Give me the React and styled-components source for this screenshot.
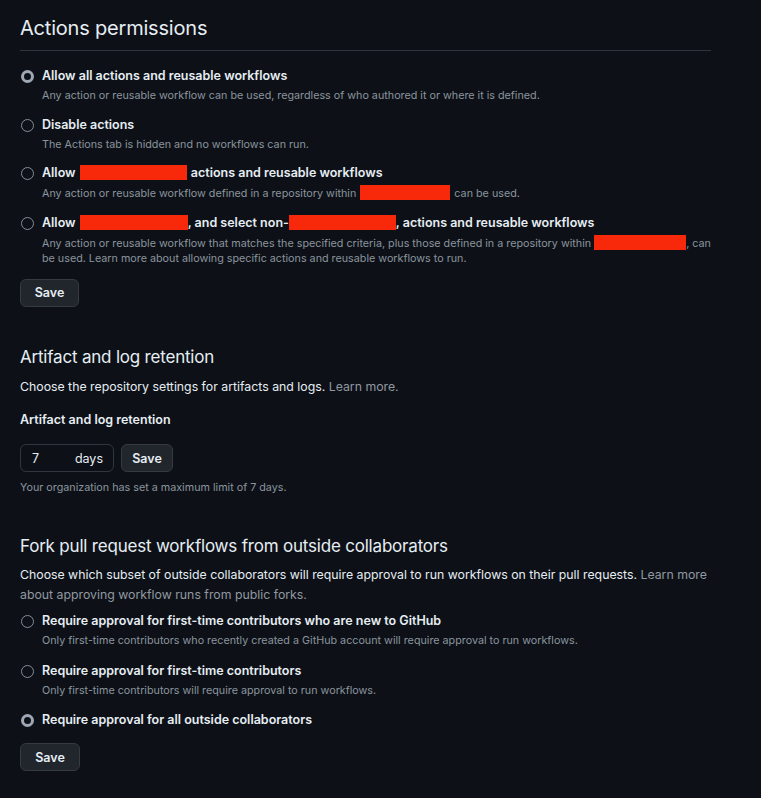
import React from 'react';
import styled, { createGlobalStyle } from 'styled-components';

const GlobalStyle = createGlobalStyle`
  html, body {
    margin: 0;
    background: #0d1117;
  }
  body {
    font-family: Inter, "Noto Sans", "Liberation Sans", sans-serif;
    color: #e6edf3;
  }
`;

const Page = styled.div`
  width: 691px;
  padding: 14px 50px 27px 20px;
`;

const Title = styled.h2`
  margin: 0;
  padding-bottom: 8px;
  border-bottom: 1px solid #30363d;
  font-size: 20px;
  line-height: 28px;
  font-weight: 400;
  letter-spacing: -0.2px;
`;

const SubTitle = styled.h3`
  margin: ${(p) => p.$top}px 0 0;
  font-size: 17px;
  line-height: 24px;
  font-weight: 400;
  letter-spacing: -0.2px;
`;

const Lead = styled.p`
  margin: ${(p) => p.$top}px 0 0;
  font-size: 12.3px;
  line-height: 19.5px;
`;

const Muted = styled.span`
  color: #9198a1;
`;

const RadioList = styled.div`
  display: flex;
  flex-direction: column;
  gap: ${(p) => p.$gap}px;
  margin-top: ${(p) => p.$top}px;
`;

const Option = styled.label`
  display: grid;
  grid-template-columns: 13px 1fr;
  column-gap: 8px;
  padding-left: 1px;
`;

const Radio = styled.span`
  width: 13px;
  height: 13px;
  box-sizing: border-box;
  border-radius: 50%;
  margin-top: 4px;
  border: ${(p) => (p.$checked ? '3.5px solid #9ea7b3' : '1px solid #848d97')};
  background: #0d1117;
`;

const OptionLabel = styled.span`
  font-size: 12.5px;
  line-height: 20px;
  font-weight: 600;
  color: #e6edf3;
`;

const OptionNote = styled.span`
  grid-column: 2;
  margin-top: 2px;
  font-size: 10.75px;
  line-height: 15.5px;
  color: #8b949e;
`;

const Redacted = styled.span`
  display: inline-block;
  width: ${(p) => p.$w}px;
  height: 15px;
  background: #f8290b;
  vertical-align: -3px;
  margin: 0 ${(p) => p.$mr ?? 1}px 0 ${(p) => p.$ml ?? 1}px;
`;

const Button = styled.button`
  display: block;
  margin-top: ${(p) => p.$top || 0}px;
  width: ${(p) => p.$w}px;
  height: 28px;
  padding: 0;
  border: 1px solid #363b42;
  border-radius: 6px;
  background: #21262d;
  color: #e6edf3;
  font-family: inherit;
  font-size: 12.5px;
  font-weight: 600;
`;

const FieldLabel = styled.div`
  margin-top: 14px;
  font-size: 12.5px;
  line-height: 20px;
  font-weight: 600;
`;

const InputRow = styled.div`
  display: flex;
  gap: 7px;
  margin-top: 14px;
`;

const DaysInput = styled.div`
  width: 94px;
  height: 28px;
  box-sizing: border-box;
  border: 1px solid #30363d;
  border-radius: 6px;
  display: flex;
  align-items: center;
  justify-content: space-between;
  padding: 0 10px 0 11px;
  font-size: 12.5px;
  color: #e6edf3;
`;

const Hint = styled.div`
  margin-top: 8px;
  font-size: 10.75px;
  line-height: 16px;
  color: #8b949e;
`;

function RadioOption({ checked, label, note }) {
  return (
    <Option>
      <Radio $checked={checked} />
      <OptionLabel>{label}</OptionLabel>
      {note && <OptionNote>{note}</OptionNote>}
    </Option>
  );
}

export default function App() {
  return (
    <Page>
      <GlobalStyle />
      <Title>Actions permissions</Title>

      <RadioList $top={15} $gap={11}>
        <RadioOption
          checked
          label="Allow all actions and reusable workflows"
          note="Any action or reusable workflow can be used, regardless of who authored it or where it is defined."
        />
        <RadioOption
          label="Disable actions"
          note="The Actions tab is hidden and no workflows can run."
        />
        <RadioOption
          label={<>Allow <Redacted $w={107} /> actions and reusable workflows</>}
          note={<>Any action or reusable workflow defined in a repository within <Redacted $w={90} /> can be used.</>}
        />
        <RadioOption
          label={<>Allow <Redacted $w={108} $mr={0} />, and select non-<Redacted $w={107} $ml={0} $mr={0} />, actions and reusable workflows</>}
          note={<>Any action or reusable workflow that matches the specified criteria, plus those defined in a repository within <Redacted $w={92} $ml={0} $mr={0} />, can be used. Learn more about allowing specific actions and reusable workflows to run.</>}
        />
      </RadioList>
      <Button $top={12} $w={59}>Save</Button>

      <SubTitle $top={38}>Artifact and log retention</SubTitle>
      <Lead $top={8}>
        Choose the repository settings for artifacts and logs. <Muted>Learn more.</Muted>
      </Lead>
      <FieldLabel>Artifact and log retention</FieldLabel>
      <InputRow>
        <DaysInput>
          <span>7</span>
          <span>days</span>
        </DaysInput>
        <Button $w={52}>Save</Button>
      </InputRow>
      <Hint>Your organization has set a maximum limit of 7 days.</Hint>

      <SubTitle $top={38}>Fork pull request workflows from outside collaborators</SubTitle>
      <Lead $top={7}>
        Choose which subset of outside collaborators will require approval to run workflows on their pull requests. <Muted>Learn more about approving workflow runs from public forks.</Muted>
      </Lead>
      <RadioList $top={7} $gap={12}>
        <RadioOption
          label="Require approval for first-time contributors who are new to GitHub"
          note="Only first-time contributors who recently created a GitHub account will require approval to run workflows."
        />
        <RadioOption
          label="Require approval for first-time contributors"
          note="Only first-time contributors will require approval to run workflows."
        />
        <RadioOption checked label="Require approval for all outside collaborators" />
      </RadioList>
      <Button $top={13} $w={60}>Save</Button>
    </Page>
  );
}
